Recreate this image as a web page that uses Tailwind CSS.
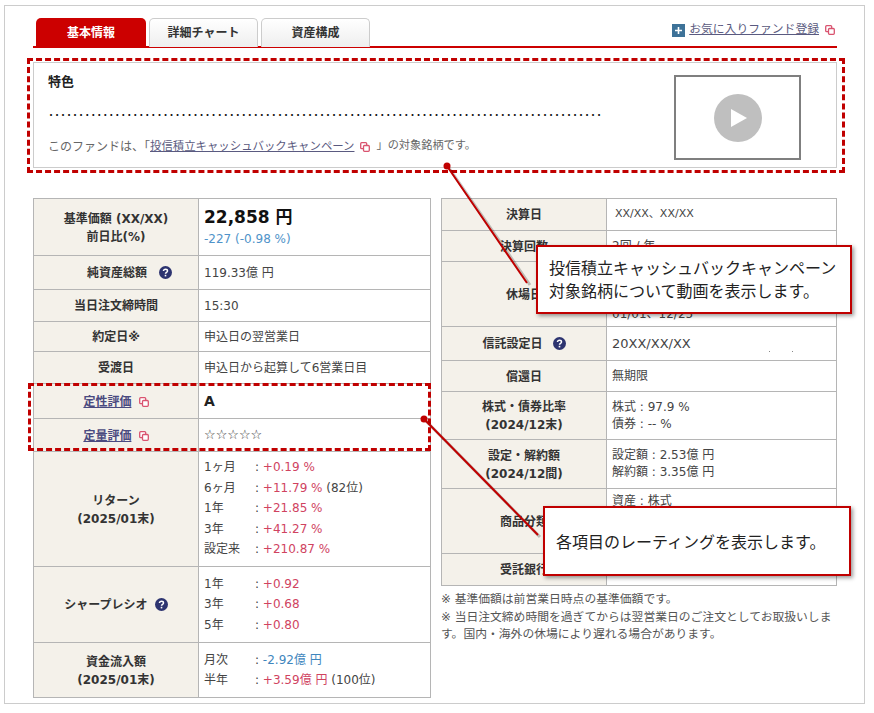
<!DOCTYPE html>
<html lang="ja">
<head>
    <meta charset="UTF-8">
    <title>基本情報</title>
    <script src="https://cdn.jsdelivr.net/npm/@tailwindcss/browser@4"></script>
</head>
<body class="bg-white">
<div class="relative w-[874px] h-[713px] overflow-hidden font-['DejaVu_Sans','Noto_Sans_CJK_JP',sans-serif] text-[12px] text-[#444]">

    <!-- frame -->
    <div class="absolute left-[4px] top-[5px] w-[861px] h-[699px] border border-[#ccc]"></div>

    <div class="relative pl-[33px] pt-[18px] w-[837px]">
        <!-- tabs -->
        <div class="flex items-end justify-between border-b-[2px] border-[#cc0000] h-[30px]">
            <div class="flex pl-[3px] gap-[3px]">
                <div class="w-[110px] h-[29px] -mb-px rounded-t-[5px] bg-[#cc0000] text-white font-bold flex items-center justify-center">基本情報</div>
                <div class="w-[109px] h-[29px] -mb-px rounded-t-[5px] border border-b-0 border-[#ccc] bg-gradient-to-b from-white to-[#eee] text-[#333] font-bold flex items-center justify-center">詳細チャート</div>
                <div class="w-[109px] h-[29px] -mb-px rounded-t-[5px] border border-b-0 border-[#ccc] bg-gradient-to-b from-white to-[#eee] text-[#333] font-bold flex items-center justify-center">資産構成</div>
            </div>
            <div class="flex items-center mb-[7px] pr-[2px]">
                <svg class="w-[13px] h-[13px] mr-[4px]" viewBox="0 0 13 13"><rect width="13" height="13" fill="#3d7298"/><path d="M3 6.5h7M6.5 3v7" stroke="#fff" stroke-width="1.6"/></svg>
                <a class="underline text-[#5a5a80] text-[11.8px]">お気に入りファンド登録</a>
                <svg class="w-[10px] h-[10px] ml-[6px]" viewBox="0 0 10 10"><rect x="0.7" y="0.7" width="6" height="6" rx="1" fill="#fff" stroke="#d9536f" stroke-width="1.3"/><rect x="3.5" y="3.5" width="5.8" height="5.8" rx="1" fill="#fff" stroke="#d9536f" stroke-width="1.3"/></svg>
            </div>
        </div>

        <!-- feature box -->
        <div class="mt-[14px] h-[106px] border border-[#ccc] flex justify-between pl-[14px] pr-[35px]">
            <div>
                <div class="mt-[9px] text-[13px] font-bold text-[#222]">特色</div>
                <div class="mt-[13px] text-[12.05px] leading-[20px] text-[#111] font-bold font-['Noto_Sans_CJK_JP',sans-serif] whitespace-nowrap">‥‥‥‥‥‥‥‥‥‥‥‥‥‥‥‥‥‥‥‥‥‥‥‥‥‥‥‥‥‥‥‥‥‥‥‥‥‥‥‥‥‥‥‥‥‥</div>
                <div class="mt-[13px] text-[#666] flex items-center whitespace-nowrap">このファンドは、「<a class="underline text-[#5a5a80] text-[11.4px]">投信積立キャッシュバックキャンペーン</a>
                    <svg class="w-[10px] h-[10px] mx-[6px]" viewBox="0 0 10 10"><rect x="0.7" y="0.7" width="6" height="6" rx="1" fill="#fff" stroke="#d9536f" stroke-width="1.3"/><rect x="3.5" y="3.5" width="5.8" height="5.8" rx="1" fill="#fff" stroke="#d9536f" stroke-width="1.3"/></svg>
                    <span class="text-[11.2px]">」の対象銘柄です。</span></div>
            </div>
            <div class="mt-[12px] w-[127px] h-[85px] border-[2px] border-[#7f7f7f] bg-white flex items-center justify-center">
                <div class="w-[48px] h-[48px] rounded-full bg-[#bfbfbf] flex items-center justify-center">
                    <svg class="w-[16px] h-[18px] ml-[3px]" viewBox="0 0 16 18"><path d="M0 0L16 9L0 18Z" fill="#fff"/></svg>
                </div>
            </div>
        </div>

        <!-- tables -->
        <div class="mt-[30px] flex items-start gap-[10px]">
            <table class="shrink-0 table-fixed border-collapse w-[398px] [&_td]:border [&_td]:border-[#b5b5b5] [&_td:first-child]:bg-[#f4f1ea] [&_td:first-child]:w-[165px] [&_td:first-child]:text-center [&_td:first-child]:font-bold [&_td:first-child]:text-[#333] [&_td:first-child]:leading-[18px] [&_td:first-child]:pt-[1px] [&_td:last-child]:pl-[5px]">
                <tbody>
                    <tr class="h-[57px]"><td>基準価額 (XX/XX)<br>前日比(%)</td><td><div class="text-[17px] leading-[22px] font-bold text-[#111]">22,858 円</div><div class="mt-[3px] text-[#4f93c9] leading-[17px]">-227 (-0.98 %)</div></td></tr>
                    <tr class="h-[34px]"><td><div class="pl-[27px]">純資産総額
                        <svg class="inline w-[13px] h-[13px] ml-[8px] align-[-2px]" viewBox="0 0 13 13"><circle cx="6.5" cy="6.5" r="6.5" fill="#2d3470"/><path d="M4.5 5.1c0-1.2.9-1.9 2-1.9s2 .7 2 1.7c0 1.5-2 1.5-2 2.9" fill="none" stroke="#fff" stroke-width="1.5"/><rect x="5.7" y="8.8" width="1.6" height="1.6" fill="#fff"/></svg></div></td><td>119.33億 円</td></tr>
                    <tr class="h-[32px]"><td>当日注文締時間</td><td>15:30</td></tr>
                    <tr class="h-[30px]"><td>約定日※</td><td>申込日の翌営業日</td></tr>
                    <tr class="h-[32px]"><td>受渡日</td><td>申込日から起算して6営業日目</td></tr>
                    <tr class="h-[35px]"><td><a class="underline text-[#4a4a80]">定性評価</a>
                        <svg class="inline w-[10px] h-[10px] ml-[3px]" viewBox="0 0 10 10"><rect x="0.7" y="0.7" width="6" height="6" rx="1" fill="#fff" stroke="#d9536f" stroke-width="1.3"/><rect x="3.5" y="3.5" width="5.8" height="5.8" rx="1" fill="#fff" stroke="#d9536f" stroke-width="1.3"/></svg></td><td class="text-[14px] font-bold text-[#222]">A</td></tr>
                    <tr class="h-[33px]"><td><a class="underline text-[#4a4a80]">定量評価</a>
                        <svg class="inline w-[10px] h-[10px] ml-[3px]" viewBox="0 0 10 10"><rect x="0.7" y="0.7" width="6" height="6" rx="1" fill="#fff" stroke="#d9536f" stroke-width="1.3"/><rect x="3.5" y="3.5" width="5.8" height="5.8" rx="1" fill="#fff" stroke="#d9536f" stroke-width="1.3"/></svg></td><td class="text-[13px] text-[#333]">☆☆☆☆☆</td></tr>
                    <tr class="h-[115px]"><td>リターン<br>(2025/01末)</td><td>
                        <div class="grid grid-cols-[51px_1fr] leading-[20.5px] -mt-[1px]">
                            <span>1ヶ月</span><span>: <span class="text-[#d0435f]">+0.19 %</span></span>
                            <span>6ヶ月</span><span>: <span class="text-[#d0435f]">+11.79 %</span> (82位)</span>
                            <span>1年</span><span>: <span class="text-[#d0435f]">+21.85 %</span></span>
                            <span>3年</span><span>: <span class="text-[#d0435f]">+41.27 %</span></span>
                            <span>設定来</span><span>: <span class="text-[#d0435f]">+210.87 %</span></span>
                        </div></td></tr>
                    <tr class="h-[76px]"><td>シャープレシオ
                        <svg class="inline w-[13px] h-[13px] ml-[3px] align-[-2px]" viewBox="0 0 13 13"><circle cx="6.5" cy="6.5" r="6.5" fill="#2d3470"/><path d="M4.5 5.1c0-1.2.9-1.9 2-1.9s2 .7 2 1.7c0 1.5-2 1.5-2 2.9" fill="none" stroke="#fff" stroke-width="1.5"/><rect x="5.7" y="8.8" width="1.6" height="1.6" fill="#fff"/></svg></td><td>
                        <div class="grid grid-cols-[51px_1fr] leading-[20.5px]">
                            <span>1年</span><span>: <span class="text-[#d0435f]">+0.92</span></span>
                            <span>3年</span><span>: <span class="text-[#d0435f]">+0.68</span></span>
                            <span>5年</span><span>: <span class="text-[#d0435f]">+0.80</span></span>
                        </div></td></tr>
                    <tr class="h-[55px]"><td>資金流入額<br>(2025/01末)</td><td>
                        <div class="grid grid-cols-[51px_1fr] leading-[20.5px]">
                            <span>月次</span><span>: <span class="text-[#3f86bd]">-2.92億 円</span></span>
                            <span>半年</span><span>: <span class="text-[#d0435f]">+3.59億 円</span> (100位)</span>
                        </div></td></tr>
                </tbody>
            </table>

            <div class="shrink-0 w-[396px]">
                <table class="table-fixed border-collapse w-[396px] [&_td]:border [&_td]:border-[#b5b5b5] [&_td:first-child]:bg-[#f4f1ea] [&_td:first-child]:w-[165px] [&_td:first-child]:text-center [&_td:first-child]:font-bold [&_td:first-child]:text-[#333] [&_td:first-child]:leading-[18px] [&_td:first-child]:pt-[1px] [&_td:last-child]:pl-[5px]">
                    <tbody>
                        <tr class="h-[32px]"><td>決算日</td><td><div class="ml-[3px] text-[11px]">XX/XX、XX/XX</div></td></tr>
                        <tr class="h-[31px]"><td>決算回数</td><td>2回 / 年</td></tr>
                        <tr class="h-[65px]"><td>休場日</td><td><div class="leading-[20px]">XX/XX、XX/XX<br>XX/XX、XX/XX<br>01/01、12/25</div></td></tr>
                        <tr class="h-[34px]"><td>信託設定日
                            <svg class="inline w-[13px] h-[13px] ml-[6px] align-[-2px]" viewBox="0 0 13 13"><circle cx="6.5" cy="6.5" r="6.5" fill="#2d3470"/><path d="M4.5 5.1c0-1.2.9-1.9 2-1.9s2 .7 2 1.7c0 1.5-2 1.5-2 2.9" fill="none" stroke="#fff" stroke-width="1.5"/><rect x="5.7" y="8.8" width="1.6" height="1.6" fill="#fff"/></svg></td><td class="text-[13px]">20XX/XX/XX</td></tr>
                        <tr class="h-[31px]"><td>償還日</td><td>無期限</td></tr>
                        <tr class="h-[48px]"><td>株式・債券比率<br>(2024/12末)</td><td><div class="leading-[17px]">株式 : 97.9 %<br>債券 : -- %</div></td></tr>
                        <tr class="h-[49px]"><td>設定・解約額<br>(2024/12間)</td><td><div class="leading-[17px]">設定額 : 2.53億 円<br>解約額 : 3.35億 円</div></td></tr>
                        <tr class="h-[65px]"><td>商品分類</td><td><div class="leading-[20px]">資産 : 株式<br>地域 : 国内<br>特色 : --</div></td></tr>
                        <tr class="h-[32px]"><td>受託銀行</td><td>XX信託銀行</td></tr>
                    </tbody>
                </table>
                <div class="mt-[5px] leading-[17.5px] text-[#555] text-[11.8px]">
                    <p>※ 基準価額は前営業日時点の基準価額です。</p>
                    <p>※ 当日注文締め時間を過ぎてからは翌営業日のご注文としてお取扱いします。国内・海外の休場により遅れる場合があります。</p>
                </div>
            </div>
        </div>
    </div>

    <!-- annotations laid over the page -->
    <div class="absolute left-[27px] top-[58px] w-[818px] h-[115px] border-[3px] border-dashed border-[#c00000]"></div>
    <div class="absolute left-[28px] top-[383px] w-[403px] h-[68px] border-[3px] border-dashed border-[#c00000]"></div>

    <svg class="absolute left-0 top-0" width="874" height="713" viewBox="0 0 874 713">
        <path d="M449 168L530 285M426 421L540 537" stroke="#000" stroke-opacity="0.22" stroke-width="3" fill="none"/>
        <path d="M447 166L527 283M424 419L538 535" stroke="#c00000" stroke-width="2" fill="none"/>
        <circle cx="447" cy="166" r="3.5" fill="#c00000"/>
        <circle cx="424" cy="419" r="3.5" fill="#c00000"/>
    </svg>

    <div class="absolute left-[536px] top-[245px] w-[316px] h-[69px] border-[2px] border-[#c00000] bg-white shadow-[2px_2px_4px_rgba(0,0,0,0.4)] pl-[11px] pt-[9px] text-[16px] leading-[23px] text-[#222] font-['Noto_Sans_CJK_JP',sans-serif] whitespace-nowrap">投信積立キャッシュバックキャンペーン<br>対象銘柄について動画を表示します。</div>
    <div class="absolute left-[543px] top-[506px] w-[308px] h-[70px] border-[2px] border-[#c00000] bg-white shadow-[2px_2px_4px_rgba(0,0,0,0.4)] pl-[11px] flex items-center text-[16px] text-[#222] font-['Noto_Sans_CJK_JP',sans-serif] whitespace-nowrap">各項目のレーティングを表示します。</div>

    <span class="absolute left-[769px] top-[351px] w-[1px] h-[1px] bg-[#888]"></span>
    <span class="absolute left-[792px] top-[351px] w-[1px] h-[1px] bg-[#888]"></span>
</div>
</body>
</html>
